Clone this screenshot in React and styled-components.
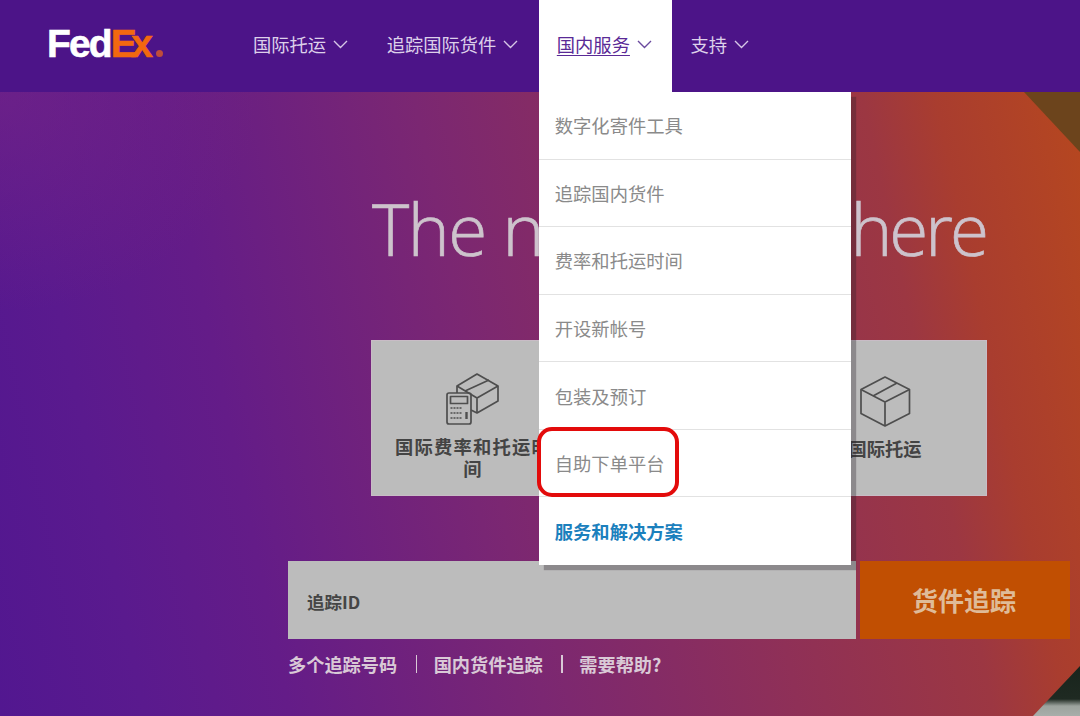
import React from 'react';
import styled, { createGlobalStyle } from 'styled-components';

const GlobalStyle = createGlobalStyle`
  html, body {
    margin: 0;
    padding: 0;
    height: 716px;
    overflow: hidden;
    background: #4c1488;
    font-family: "Noto Sans CJK SC", "Liberation Sans", sans-serif;
  }
`;

const Page = styled.div`
  width: 1080px;
  height: 716px;
  display: flex;
  flex-direction: column;
  overflow: hidden;
`;

const Header = styled.header`
  height: 92px;
  flex: none;
  background: #4c1488;
  display: flex;
  align-items: stretch;
  padding-left: 47px;
  position: relative;
  z-index: 2;
`;

const Logo = styled.div`
  width: 115px;
  height: 70px;
  flex: none;
  box-sizing: border-box;
  margin-right: 73px;
  padding-top: 19px;
  display: flex;
  align-items: baseline;
  font-family: "Liberation Sans", sans-serif;
  font-weight: 700;
  font-size: 39px;
  line-height: 50px;
  letter-spacing: -1.9px;
  -webkit-text-stroke: 0.6px currentColor;
  color: #fff;
`;

const LogoEx = styled.span`
  color: #f2680f;
  letter-spacing: -5.5px;
`;

const LogoDot = styled.span`
  width: 7px;
  height: 7px;
  flex: none;
  border-radius: 50%;
  background: #bf4d3a;
  margin-left: 9px;
`;

const Nav = styled.nav`
  display: flex;
  align-items: stretch;
`;

const NavItem = styled.div`
  position: relative;
  height: 92px;
  box-sizing: border-box;
  display: flex;
  align-items: center;
  gap: 7px;
  padding: 0 20.5px 4px 18px;
  font-size: 18.3px;
  color: ${(p) => (p.$active ? '#5a2a96' : '#ddd0ea')};
  background: ${(p) => (p.$active ? '#fff' : 'transparent')};
`;

const NavLabel = styled.span`
  line-height: 1;
  white-space: nowrap;
  text-decoration: ${(p) => (p.$active ? 'underline' : 'none')};
  text-underline-offset: 3px;
  text-decoration-thickness: 1px;
`;

const Chevron = styled.svg`
  width: 15px;
  height: 9px;
  flex: none;
  fill: none;
  stroke: ${(p) => (p.$active ? '#6a4a9e' : '#d6c6e6')};
  stroke-width: 1.4;
`;

const Menu = styled.div`
  position: absolute;
  top: 92px;
  left: 0;
  width: 312px;
  height: 473px;
  background: #fff;
  box-shadow: 5px 5px 1px rgba(40, 30, 40, 0.32);
  display: flex;
  flex-direction: column;
`;

const MenuRow = styled.div`
  position: relative;
  height: 67.7px;
  box-sizing: border-box;
  display: flex;
  align-items: center;
  padding-left: 16px;
  font-size: 18.3px;
  white-space: nowrap;
  color: ${(p) => (p.$link ? '#1b80bd' : '#8a8a8a')};
  font-weight: ${(p) => (p.$link ? 700 : 400)};
  border-bottom: ${(p) => (p.$link ? 'none' : '1.5px solid #e2e2e2')};
`;

const Highlight = styled.div`
  position: absolute;
  left: -2px;
  top: -3px;
  width: 142px;
  height: 70px;
  box-sizing: border-box;
  border: 4px solid #e30b0b;
  border-radius: 15px;
`;

const Hero = styled.main`
  position: relative;
  flex: 1;
  overflow: hidden;
  box-sizing: border-box;
  padding: 0 10px 0 288px;
  display: flex;
  flex-direction: column;
  align-items: center;
  background:
    radial-gradient(ellipse 260px 220px at 0 0, rgba(128, 40, 130, 0.45), rgba(128, 40, 130, 0)),
    linear-gradient(78deg, #521790 0%, #5a1a8e 12%, #641c88 24%, #7b2772 45%, #8f3057 66%, #9c3742 82%, #a93d2f 88%, #b6471f 100%);
`;

const CornerTop = styled.div`
  position: absolute;
  top: 0;
  right: 0;
  width: 56px;
  height: 60px;
  background: #6c441c;
  clip-path: polygon(0 0, 100% 0, 100% 100%);
`;

const CornerBottom = styled.div`
  position: absolute;
  right: 0;
  bottom: 0;
  width: 47px;
  height: 50px;
  background: linear-gradient(180deg, #18241c 0%, #1f2a22 66%, #9ca39e 80%, #a8aeaa 100%);
  clip-path: polygon(100% 0, 100% 100%, 0 100%);
`;

const Title = styled.h1`
  width: 614px;
  margin: 89px 0 0;
  position: relative;
  display: flex;
  justify-content: space-between;
  font-family: "Open Sans", "Liberation Sans", sans-serif;
  font-weight: 300;
  font-size: 71px;
  line-height: 96px;
  letter-spacing: -1.5px;
  -webkit-text-stroke: 0.7px currentColor;
  white-space: nowrap;
  color: #cdc3cc;
`;

const TitleEnd = styled.span`
  letter-spacing: -3px;
`;

const Cards = styled.div`
  position: relative;
  margin-top: 63px;
  width: 616px;
  display: flex;
  justify-content: space-between;
`;

const Card = styled.div`
  width: 204px;
  height: 156px;
  box-sizing: border-box;
  padding: 32px 18px 0;
  background: #bcbcbc;
  border: 1px solid #c9bcc6;
  display: flex;
  flex-direction: column;
  align-items: center;
`;

const CardIcon = styled.svg`
  width: ${(p) => p.$w}px;
  height: 54px;
  flex: none;
  margin: ${(p) => p.$offset}px 0 0;
  fill: none;
  stroke: #4e4e4e;
  stroke-width: 1.7;
  stroke-linejoin: round;
`;

const CardText = styled.div`
  margin-top: ${(p) => p.$gap}px;
  font-size: 18.3px;
  line-height: 22px;
  font-weight: 700;
  letter-spacing: ${(p) => p.$track}px;
  color: #444;
  text-align: center;
`;

const Search = styled.div`
  position: relative;
  margin-top: 65px;
  width: 782px;
  height: 78px;
  display: flex;
  gap: 4px;
`;

const InputBox = styled.div`
  flex: 1;
  box-sizing: border-box;
  padding: 3px 0 0 19px;
  background: #bcbcbc;
  display: flex;
  align-items: center;
  font-size: 17.5px;
  font-weight: 700;
  color: #454545;
`;

const TrackButton = styled.div`
  width: 210px;
  box-sizing: border-box;
  padding: 0 2px 2px 0;
  background: #c14f02;
  display: flex;
  align-items: center;
  justify-content: center;
  font-size: 26px;
  font-weight: 700;
  color: #dfbb98;
`;

const Links = styled.div`
  align-self: flex-start;
  margin-top: 14px;
  display: flex;
  align-items: center;
  font-size: 18.2px;
  line-height: 22px;
  font-weight: 700;
  color: #d9c9d6;
`;

const Sep = styled.span`
  width: 1.5px;
  height: 18px;
  margin: 0 16.5px 0 18.5px;
  background: #d9c9d6;
`;

const navItems = [
  { label: '国际托运' },
  { label: '追踪国际货件' },
  { label: '国内服务', active: true },
  { label: '支持' },
];

const menuItems = ['数字化寄件工具', '追踪国内货件', '费率和托运时间', '开设新帐号', '包装及预订'];

function Arrow({ active }) {
  return (
    <Chevron $active={active} viewBox="0 0 15 9">
      <path d="M1 1l6.5 6.5L14 1" />
    </Chevron>
  );
}

function CalcBoxIcon() {
  return (
    <CardIcon $w={54} $offset={0} viewBox="0 0 54 54">
      <path d="M11 20v-7L31 1l21 12v15L31 40l-6-3" />
      <path d="M11 13l20 12 21-12M31 25v15M19 18L43 7" />
      <rect x="1" y="20" width="24" height="31" rx="2" />
      <rect x="4.5" y="23.5" width="17" height="7" />
      <path d="M4.5 35h12M4.5 40h12M4.5 45h12" strokeDasharray="2 1" />
      <path d="M20.5 39v7" strokeWidth="2.4" />
    </CardIcon>
  );
}

function BoxIcon() {
  return (
    <CardIcon $w={51} $offset={3} viewBox="0 0 51 54">
      <path d="M25 1L1 13.5v24L25 50l24.5-12.5v-24z" />
      <path d="M1 13.5L25 26l24.5-12.5M25 26v24M13 20L37 7" />
    </CardIcon>
  );
}

export default function App() {
  return (
    <Page>
      <GlobalStyle />
      <Header>
        <Logo>
          Fed<LogoEx>Ex</LogoEx>
          <LogoDot />
        </Logo>
        <Nav>
          {navItems.map((item) => (
            <NavItem key={item.label} $active={item.active}>
              <NavLabel $active={item.active}>{item.label}</NavLabel>
              <Arrow active={item.active} />
              {item.active && (
                <Menu>
                  {menuItems.map((m) => (
                    <MenuRow key={m}>{m}</MenuRow>
                  ))}
                  <MenuRow>
                    自助下单平台
                    <Highlight />
                  </MenuRow>
                  <MenuRow $link>服务和解决方案</MenuRow>
                </Menu>
              )}
            </NavItem>
          ))}
        </Nav>
      </Header>
      <Hero>
        <CornerTop />
        <CornerBottom />
        <Title>
          <span>The new</span>
          <TitleEnd>here</TitleEnd>
        </Title>
        <Cards>
          <Card>
            <CalcBoxIcon />
            <CardText $gap={8} $track={1.2}>国际费率和托运时间</CardText>
          </Card>
          <Card />
          <Card>
            <BoxIcon />
            <CardText $gap={7} $track={0}>国际托运</CardText>
          </Card>
        </Cards>
        <Search>
          <InputBox>追踪ID</InputBox>
          <TrackButton>货件追踪</TrackButton>
        </Search>
        <Links>
          多个追踪号码
          <Sep />
          国内货件追踪
          <Sep />
          需要帮助?
        </Links>
      </Hero>
    </Page>
  );
}
